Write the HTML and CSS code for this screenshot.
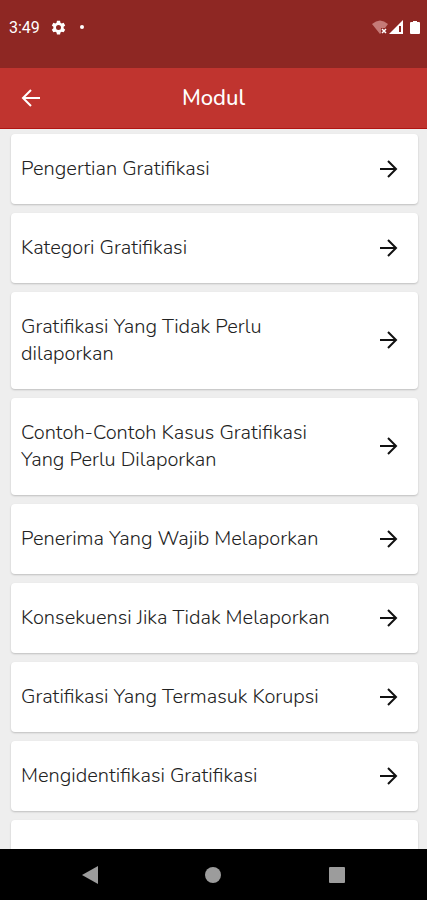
FILE: index.html
```html
<!DOCTYPE html>
<html lang="id">
<head>
<meta charset="utf-8">
<meta name="viewport" content="width=device-width, initial-scale=1">
<title>Modul</title>
<link rel="stylesheet" href="styles.css">
</head>
<body>
<svg class="sprite" aria-hidden="true">
  <symbol id="arrow" viewBox="0 0 20 20"><path d="M1 10H17M9 2L17 10L9 18" fill="none" stroke="currentColor" stroke-width="2"/></symbol>
</svg>
<div class="status">
  <span class="time">3:49</span>
  <svg class="gear" viewBox="0 0 24 24"><path fill="currentColor" fill-rule="evenodd" d="M9.500 1h5l.6 3.200 2 1.200 3.100-1.100 2.500 4.300-2.500 2.200v2.400l2.500 2.200-2.500 4.300-3.100-1.100-2 1.200-.6 3.200h-5l-.6-3.200-2-1.200-3.100 1.100-2.500-4.300 2.500-2.200v-2.400L1.300 8.600l2.500-4.300 3.100 1.100 2-1.200zM12 8a4 4 0 1 0 0 8 4 4 0 0 0 0-8z"/></svg>
  <span class="dot"></span>
  <svg class="signals" viewBox="0 0 50 16">
    <path d="M0 4Q8-3 16 4L13 8H9V13L8 14Z" fill="#c57a77"/>
    <path d="M10 9l4 4M14 9l-4 4" stroke="#fff" stroke-width="1.500"/>
    <path d="M31 0V14H17Z" fill="#fff"/>
    <path d="M28 6V12" stroke="#8e2723" stroke-width="2"/>
    <path d="M41 1h4v1h2q1 0 1 1v10q0 1-1 1h-8q-1 0-1-1V3q0-1 1-1h2z" fill="#fff"/>
  </svg>
</div>
<header class="appbar">
  <button class="back" aria-label="Kembali"><svg class="arrow" viewBox="0 0 20 20"><path d="M19 10H3M10 2L2 10L10 18" fill="none" stroke="currentColor" stroke-width="2"/></svg></button>
  <h1>Modul</h1>
</header>
<main class="list">
  <a class="card" href="#"><span>Pengertian Gratifikasi</span><svg class="arrow"><use href="#arrow"/></svg></a>
  <a class="card" href="#"><span>Kategori Gratifikasi</span><svg class="arrow"><use href="#arrow"/></svg></a>
  <a class="card" href="#"><span>Gratifikasi Yang Tidak Perlu dilaporkan</span><svg class="arrow"><use href="#arrow"/></svg></a>
  <a class="card" href="#"><span>Contoh-Contoh Kasus Gratifikasi Yang Perlu Dilaporkan</span><svg class="arrow"><use href="#arrow"/></svg></a>
  <a class="card" href="#"><span>Penerima Yang Wajib Melaporkan</span><svg class="arrow"><use href="#arrow"/></svg></a>
  <a class="card" href="#"><span>Konsekuensi Jika Tidak Melaporkan</span><svg class="arrow"><use href="#arrow"/></svg></a>
  <a class="card" href="#"><span>Gratifikasi Yang Termasuk Korupsi</span><svg class="arrow"><use href="#arrow"/></svg></a>
  <a class="card" href="#"><span>Mengidentifikasi Gratifikasi</span><svg class="arrow"><use href="#arrow"/></svg></a>
  <div class="card"></div>
</main>
<nav class="navbar">
  <button aria-label="Back"><svg viewBox="0 0 18 18"><path d="M1 9L17 0V18Z"/></svg></button>
  <button aria-label="Home"><svg viewBox="0 0 18 18"><circle cx="9" cy="9" r="8"/></svg></button>
  <button aria-label="Recents"><svg viewBox="0 0 18 18"><rect x="1" y="1" width="16" height="16" rx="1"/></svg></button>
</nav>
</body>
</html>
```
FILE: styles.css
```css
* { box-sizing: border-box; }
body {
  margin: 0;
  height: 100vh;
  display: flex;
  flex-direction: column;
  overflow: hidden;
  background: #eee;
  color: #222;
  font-family: Nunito, Lato, sans-serif;
}
button { border: 0; padding: 0; background: none; color: inherit; display: flex; }
.sprite { display: none; }
.status {
  flex: none;
  height: 68px;
  padding: 18px 5px 0 9px;
  display: flex;
  align-items: flex-start;
  background: #8e2723;
  color: #fff;
  font: 16px/20px Roboto, sans-serif;
}
.gear { width: 15px; height: 15px; margin: 2px 0 0 11px; }
.dot { width: 4px; height: 4px; margin: 7px 0 0 14px; border-radius: 50%; background: #fff; }
.signals { width: 50px; height: 16px; margin: 2px 0 0 auto; }
.appbar {
  flex: none;
  height: 61px;
  padding: 0 21px;
  display: grid;
  grid-template-columns: 20px 1fr 20px;
  align-items: center;
  background: #c0342f;
  border-bottom: 1px solid #b01512;
  color: #fff;
}
h1 { margin: 0; text-align: center; font-size: 22px; font-weight: 500; line-height: 28px; }
.arrow { flex: none; width: 20px; height: 20px; }
.list {
  flex: 1;
  min-height: 0;
  overflow: hidden;
  padding: 5px 9px 0 11px;
  display: flex;
  flex-direction: column;
  gap: 9px;
}
.card {
  flex: none;
  min-height: 70px;
  padding: 21px 19px 22px 10px;
  display: flex;
  align-items: center;
  justify-content: space-between;
  gap: 32px;
  border-radius: 4px;
  background: #fff;
  box-shadow: 0 1px 2px rgba(0, 0, 0, .2);
  color: #222;
  text-decoration: none;
  font-size: 20px;
  font-weight: 300;
  line-height: 27px;
}
.card .arrow { color: #111; }
.navbar {
  flex: none;
  height: 51px;
  padding: 0 28px;
  display: grid;
  grid-template-columns: repeat(3, 1fr);
  align-items: center;
  justify-items: center;
  background: #000;
}
.navbar svg { width: 18px; height: 18px; fill: #9c9c9c; }
```
